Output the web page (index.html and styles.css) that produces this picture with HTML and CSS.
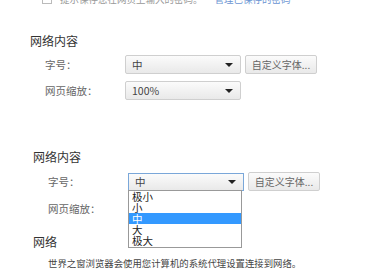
FILE: index.html
```html
<!DOCTYPE html>
<html lang="zh-CN">
<head>
    <meta charset="UTF-8">
    <title>设置 - 网络内容</title>
    <link rel="stylesheet" href="styles.css">
</head>
<body>

    <!-- cut-off line from the previous section -->
    <div class="notice">
        <div class="notice-line">
            <span class="check"></span>
            <span class="notice-text">提示保存您在网页上输入的密码。</span>
            <a class="link">管理已保存的密码</a>
        </div>
    </div>

    <!-- Web content, closed -->
    <div class="section first">
        <h2 class="sec-title">网络内容</h2>
        <div class="row">
            <span class="label">字号：</span>
            <div class="select"><span>中</span><i class="arrow"></i></div>
            <button class="btn">自定义字体...</button>
        </div>
        <div class="row">
            <span class="label">网页缩放：</span>
            <div class="select"><span>100%</span><i class="arrow"></i></div>
        </div>
    </div>

    <!-- Web content, font size list open -->
    <div class="section second">
        <h2 class="sec-title">网络内容</h2>
        <div class="row">
            <span class="label">字号：</span>
            <div class="select open">
                <span>中</span><i class="arrow"></i>
                <ul class="options">
                    <li>极小</li>
                    <li>小</li>
                    <li class="active">中</li>
                    <li>大</li>
                    <li>极大</li>
                </ul>
            </div>
            <button class="btn">自定义字体...</button>
        </div>
        <div class="row">
            <span class="label">网页缩放：</span>
        </div>

        <h2 class="sec-title net">网络</h2>
        <p class="desc">世界之窗浏览器会使用您计算机的系统代理设置连接到网络。</p>
    </div>

</body>
</html>
```

FILE: styles.css
```css
body {
    margin: 0;
    font-family: "Noto Sans CJK SC", "DejaVu Sans", sans-serif;
    font-size: 12px;
    color: #444;
    background: #fff;
}

.notice {
    height: 9px;
    overflow: hidden;
    padding-left: 42px;
}
.notice-line {
    margin-top: -8px;
    display: flex;
    align-items: center;
    font-size: 9.5px;
    line-height: 14px;
    color: #999;
}
.check {
    width: 8px;
    height: 8px;
    border: 1px solid #bbb;
    margin-right: 8px;
}
.link {
    color: #6b95d3;
    margin-left: 12px;
}

.section.first {
    padding: 23px 0 0 30px;
}
.section.second {
    padding: 48px 0 0 33px;
}
.sec-title {
    margin: 0;
    font-size: 12px;
    font-weight: normal;
    line-height: 17px;
    color: #333;
}

.row {
    display: flex;
    align-items: center;
    margin-top: 7px;
}
.first .row:first-of-type {
    margin-top: 6px;
}
.second .row:first-of-type {
    margin-top: 7px;
}
.second .row + .row {
    margin-top: 8px;
    height: 18px;
}
.label {
    width: 80px;
    padding-left: 15px;
    font-size: 10.5px;
    color: #666;
}

.select {
    position: relative;
    box-sizing: border-box;
    width: 116px;
    height: 19px;
    display: flex;
    align-items: center;
    justify-content: space-between;
    padding: 0 7px 0 6px;
    border: 1px solid #cfcfcf;
    border-radius: 2px;
    background: linear-gradient(#fbfbfb, #e9e9e9);
    color: #444;
    font-size: 10.5px;
}
.arrow {
    width: 0;
    height: 0;
    border-left: 4px solid transparent;
    border-right: 4px solid transparent;
    border-top: 4px solid #222;
}
.select.open {
    height: 18px;
    border-color: #7aa7d9;
    border-radius: 0;
}

.options {
    position: absolute;
    left: -1px;
    top: 16px;
    width: 112px;
    margin: 0;
    padding: 0 0 1px;
    list-style: none;
    background: #fff;
    border: 1px solid #999;
    font-size: 10.5px;
    line-height: 11px;
    color: #222;
}
.options li {
    padding-left: 3px;
    height: 11px;
}
.options li.active {
    background: #3399ff;
    color: #fff;
}

.btn {
    box-sizing: border-box;
    height: 19px;
    width: 72px;
    margin-left: 4px;
    padding: 0;
    border: 1px solid #cfcfcf;
    border-radius: 2px;
    background: linear-gradient(#fbfbfb, #e9e9e9);
    font-family: inherit;
    font-size: 10px;
    color: #666;
}

.sec-title.net {
    margin-top: 16px;
}
.desc {
    margin: 7px 0 0 15px;
    font-size: 9.4px;
    line-height: 12px;
    color: #444;
}
```
